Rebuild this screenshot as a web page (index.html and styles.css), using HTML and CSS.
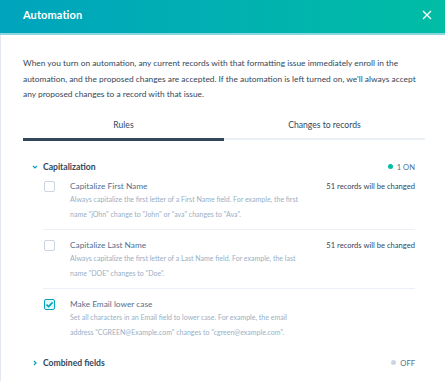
FILE: index.html
```html
<!DOCTYPE html>
<html>
<head>
<meta charset="utf-8">
<link rel="stylesheet" href="styles.css">
</head>
<body>
<div class="modal">
  <header class="header">
    <h1 class="title">Automation</h1>
    <svg class="close" width="10" height="10" viewBox="0 0 10 10"><path d="M1 1L9 9M9 1L1 9" stroke="#fff" stroke-width="1.3" fill="none"/></svg>
  </header>
  <div class="body">
    <p class="intro">When you turn on automation, any current records with that formatting issue immediately enroll in the automation, and the proposed changes are accepted. If the automation is left turned on, we'll always accept any proposed changes to a record with that issue.</p>
    <div class="tabs">
      <div class="tab active">Rules</div>
      <div class="tab">Changes to records</div>
    </div>
    <section class="section">
      <div class="section-head">
        <svg class="chev" width="6" height="6" viewBox="0 0 6 6"><path d="M1 2L3 4L5 2" stroke="#00a4bd" stroke-width="1.2" fill="none"/></svg>
        <span class="section-title">Capitalization</span>
        <span class="status"><span class="dot on"></span>1 ON</span>
      </div>
      <div class="rules">
        <div class="rule">
          <span class="box"></span>
          <div class="rule-main">
            <div class="rule-label">Capitalize First Name</div>
            <div class="rule-desc">Always capitalize the first letter of a First Name field. For example, the first name "jOhn" change to "John" or "ava" changes to "Ava".</div>
          </div>
          <div class="count">51 records will be changed</div>
        </div>
        <div class="rule">
          <span class="box"></span>
          <div class="rule-main">
            <div class="rule-label">Capitalize Last Name</div>
            <div class="rule-desc">Always capitalize the first letter of a Last Name field. For example, the last name "DOE" changes to "Doe".</div>
          </div>
          <div class="count">51 records will be changed</div>
        </div>
        <div class="rule">
          <span class="box checked"><svg width="9" height="9" viewBox="0 0 9 9"><path d="M1.5 4.6L3.6 6.6L7.6 2.4" stroke="#00a4bd" stroke-width="1.6" fill="none"/></svg></span>
          <div class="rule-main">
            <div class="rule-label">Make Email lower case</div>
            <div class="rule-desc">Set all characters in an Email field to lower case. For example, the email address "CGREEN@Example.com" changes to "cgreen@example.com".</div>
          </div>
          <div class="count"></div>
        </div>
      </div>
    </section>
    <section class="section collapsed">
      <div class="section-head">
        <svg class="chev" width="6" height="6" viewBox="0 0 6 6"><path d="M2 1L4 3L2 5" stroke="#00a4bd" stroke-width="1.2" fill="none"/></svg>
        <span class="section-title">Combined fields</span>
        <span class="status"><span class="dot off"></span>OFF</span>
      </div>
    </section>
  </div>
</div>
</body>
</html>
```
FILE: styles.css
```css
* { box-sizing: border-box; }
html, body { margin: 0; padding: 0; background: #fff; }
body { font-family: Lato, "Noto Sans", sans-serif; color: #33475b; width: 445px; height: 381px; overflow: hidden; }
.modal { display: flex; flex-direction: column; height: 381px; }
.header {
  height: 35px;
  flex: none;
  background: linear-gradient(90deg, #00a4bd 0%, #00bda5 100%);
  border-bottom: 2px solid #8ad6df;
  display: flex;
  align-items: center;
  justify-content: space-between;
  padding: 0 13px 4px 23px;
}
.title { margin: 0; font-size: 11px; font-weight: 700; color: #fff; letter-spacing: 0.1px; }
.close { display: block; }
.body {
  flex: 1;
  border-left: 1px solid #e3e8ee;
  padding: 21px 20px 0 22px;
}
.intro {
  margin: 0;
  font-size: 8.4px;
  line-height: 15.6px;
  color: #33475b;
}
.tabs {
  display: grid;
  grid-template-columns: 1fr 1fr;
  align-items: end;
  margin-top: 16px;
}
.tab {
  text-align: center;
  font-size: 8.6px;
  line-height: 12px;
  padding-bottom: 7px;
  color: #33475b;
  border-bottom: 2px solid #eaf0f6;
  margin-bottom: 0.5px;
}
.tab.active { border-bottom: 3px solid #33475b; margin-bottom: 0; }
.section { margin: 0 10px 0 9px; }
.section-head {
  display: flex;
  align-items: center;
  height: 12px;
  margin-top: 20px;
  font-size: 8.6px;
}
.chev { display: block; margin-right: 5px; }
.section-title { font-weight: 700; color: #33475b; flex: 1; }
.status { display: flex; align-items: center; font-size: 7.6px; color: #516f90; }
.dot { width: 5px; height: 5px; border-radius: 50%; margin-right: 4px; }
.dot.on { background: #00bda5; }
.dot.off { background: #cbd6e2; }
.rules { margin-left: 11px; }
.rule {
  display: flex;
  align-items: flex-start;
  padding: 9px 0 7px;
  border-bottom: 1px solid #eaf0f6;
}
.rule:first-child { padding-top: 7px; }
.rule:last-child { border-bottom: none; }
.box {
  flex: none;
  width: 11px;
  height: 11px;
  margin: 1px 15px 0 1px;
  border: 1px solid #cbd6e2;
  border-radius: 2px;
  display: flex;
  align-items: center;
  justify-content: center;
}
.box.checked { border: 1.5px solid #00a4bd; background: #e5f8f6; }
.box svg { display: block; }
.rule-main { flex: none; width: 238px; }
.rule-label { font-size: 8.3px; line-height: 12px; color: #516f90; }
.rule-desc { font-size: 7px; line-height: 15px; color: #99afc4; }
.count { flex: 1; text-align: right; font-size: 7.6px; line-height: 12px; color: #33475b; }
.collapsed .section-head { margin-top: 10px; }
```
